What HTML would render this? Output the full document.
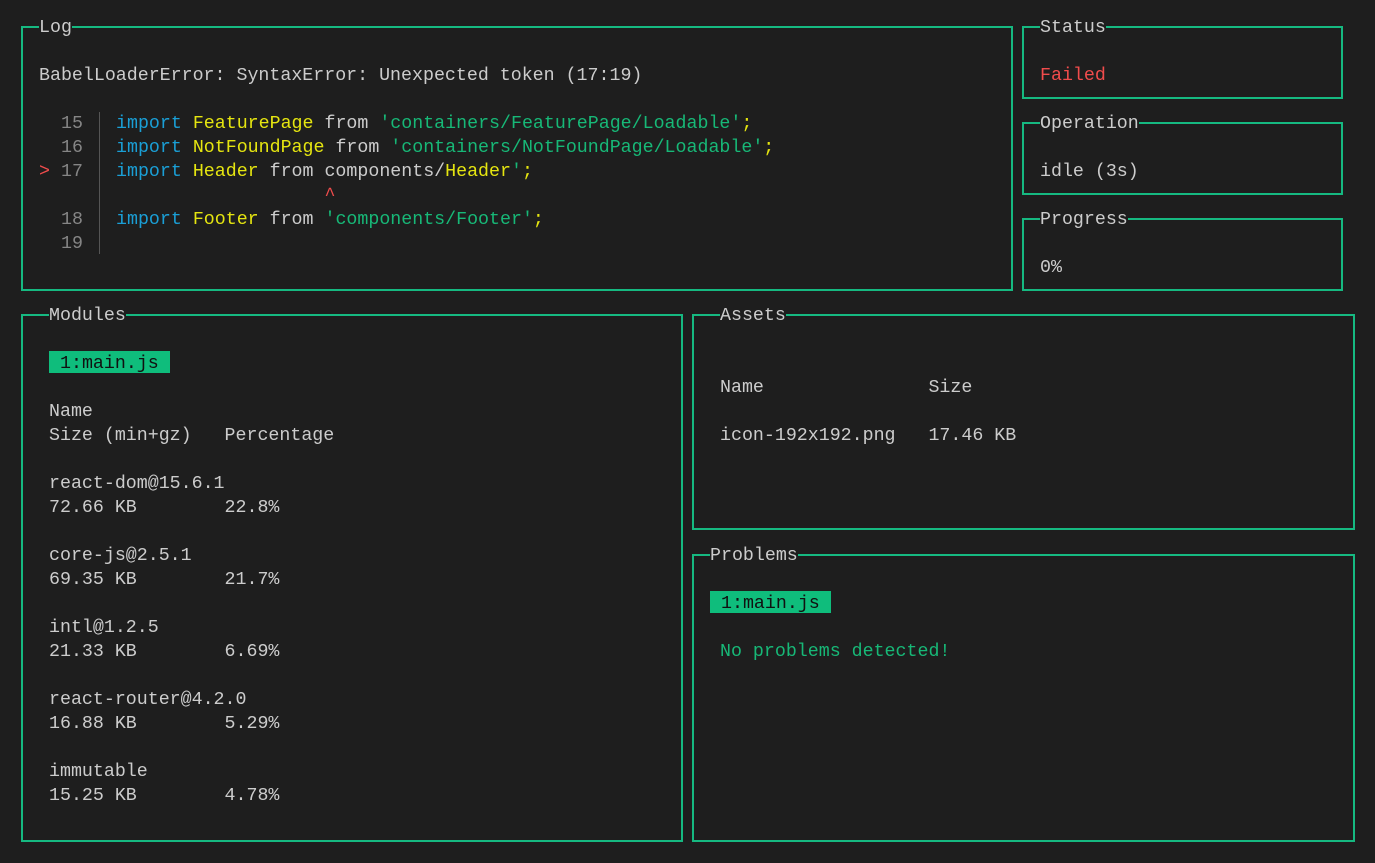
<!DOCTYPE html>
<html><head><style>
body{margin:0;width:1375px;height:863px;background:#1e1e1e;overflow:hidden;position:relative;font-family:"Liberation Mono",monospace;font-size:18.3px;color:#cccccc}
.b{position:absolute;border:2px solid #16b981;box-sizing:border-box}
.t{position:absolute;line-height:24px;white-space:pre;height:24px;margin-top:2px}
.h{background:#1e1e1e;padding:0}
.k{color:#1a9fd6}.y{color:#e5e510}.g{color:#17b877}.r{color:#f14c4c}.n{color:#858585}
.hl{position:absolute;background:#0fbd7c;color:#111}
.bar{position:absolute;width:1px;background:#555;left:99px}
</style></head><body>
<div class="b" style="left:21px;top:26px;width:992px;height:265px"></div>
<div class="b" style="left:1022px;top:26px;width:321px;height:73px"></div>
<div class="b" style="left:1022px;top:122px;width:321px;height:73px"></div>
<div class="b" style="left:1022px;top:218px;width:321px;height:73px"></div>
<div class="b" style="left:21px;top:314px;width:662px;height:528px"></div>
<div class="b" style="left:692px;top:314px;width:663px;height:216px"></div>
<div class="b" style="left:692px;top:554px;width:663px;height:288px"></div>

<div class="t h" style="left:39px;top:14px">Log</div>
<div class="t h" style="left:1040px;top:14px">Status</div>
<div class="t h" style="left:1040px;top:110px">Operation</div>
<div class="t h" style="left:1040px;top:206px">Progress</div>
<div class="t h" style="left:49px;top:302px">Modules</div>
<div class="t h" style="left:720px;top:302px">Assets</div>
<div class="t h" style="left:710px;top:542px">Problems</div>

<div class="t" style="left:39px;top:62px">BabelLoaderError: SyntaxError: Unexpected token (17:19)</div>
<div class="bar" style="top:112px;height:142px"></div>
<div class="t n" style="left:61px;top:110px">15</div>
<div class="t" style="left:116px;top:110px"><span class="k">import</span> <span class="y">FeaturePage</span> from <span class="g">'containers/FeaturePage/Loadable'</span><span class="y">;</span></div>
<div class="t n" style="left:61px;top:134px">16</div>
<div class="t" style="left:116px;top:134px"><span class="k">import</span> <span class="y">NotFoundPage</span> from <span class="g">'containers/NotFoundPage/Loadable'</span><span class="y">;</span></div>
<div class="t" style="left:39px;top:158px"><span class="r">&gt;</span> <span class="n">17</span></div>
<div class="t" style="left:116px;top:158px"><span class="k">import</span> <span class="y">Header</span> from components/<span class="y">Header</span><span class="g">'</span><span class="y">;</span></div>
<div class="t r" style="left:116px;top:182px">                   ^</div>
<div class="t n" style="left:61px;top:206px">18</div>
<div class="t" style="left:116px;top:206px"><span class="k">import</span> <span class="y">Footer</span> from <span class="g">'components/Footer'</span><span class="y">;</span></div>
<div class="t n" style="left:61px;top:230px">19</div>

<div class="t r" style="left:1040px;top:62px">Failed</div>
<div class="t" style="left:1040px;top:158px">idle (3s)</div>
<div class="t" style="left:1040px;top:254px">0%</div>

<div class="hl" style="left:49px;top:351px;width:121px;height:22px"></div>
<div class="t" style="left:60px;top:350px;color:#111">1:main.js</div>
<div class="t" style="left:49px;top:398px">Name
Size (min+gz)   Percentage

react-dom@15.6.1
72.66 KB        22.8%

core-js@2.5.1
69.35 KB        21.7%

intl@1.2.5
21.33 KB        6.69%

react-router@4.2.0
16.88 KB        5.29%

immutable
15.25 KB        4.78%</div>

<div class="t" style="left:720px;top:374px">Name               Size

icon-192x192.png   17.46 KB</div>

<div class="hl" style="left:710px;top:591px;width:121px;height:22px"></div>
<div class="t" style="left:721px;top:590px;color:#111">1:main.js</div>
<div class="t g" style="left:720px;top:638px">No problems detected!</div>
</body></html>
